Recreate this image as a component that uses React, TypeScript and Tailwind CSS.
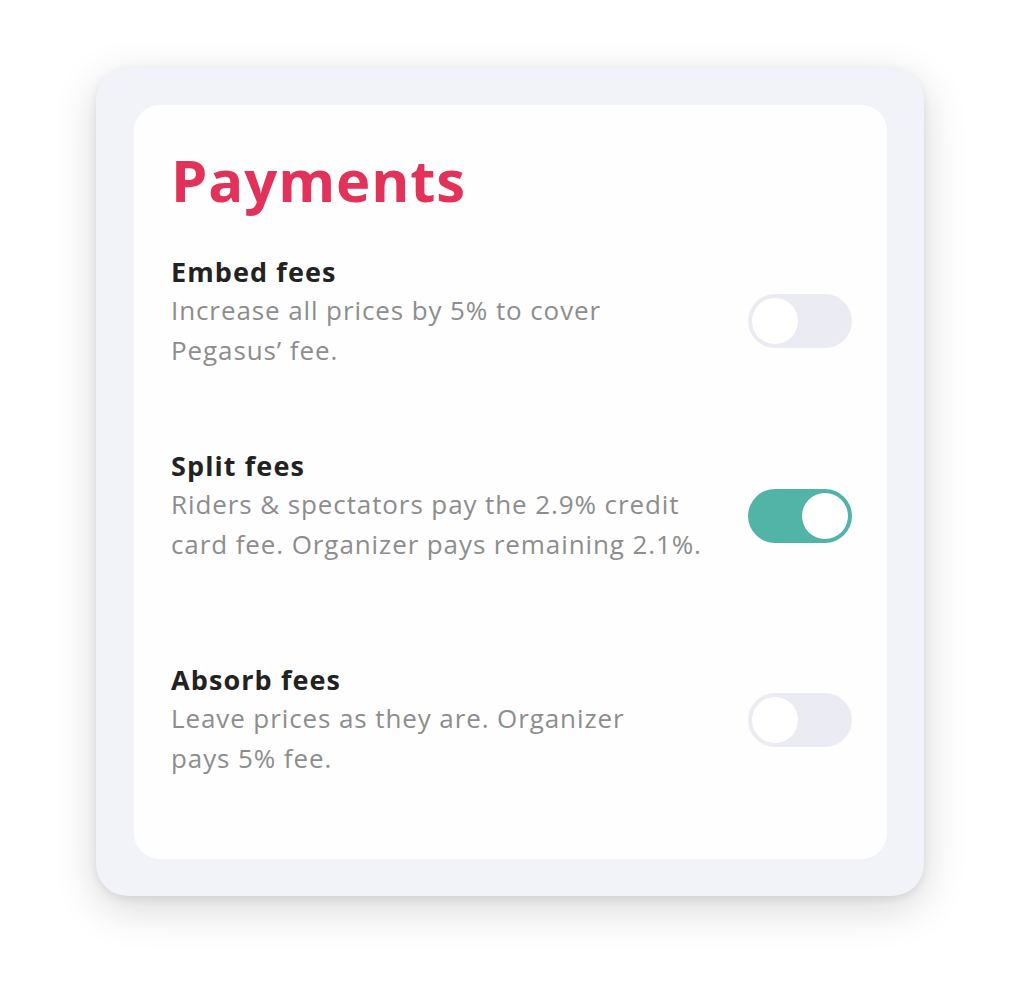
import React from "react";

function Toggle({ on }: { on: boolean }) {
  return (
    <div
      className={
        on
          ? "w-[104px] h-[54px] rounded-full bg-[#52b3a7] flex items-center justify-end px-[4px] shrink-0"
          : "w-[104px] h-[54px] rounded-full bg-[#ebebf3] flex items-center justify-start px-[4px] shrink-0"
      }
    >
      <div className="w-[46px] h-[46px] rounded-full bg-white" />
    </div>
  );
}

function Row({
  title,
  lines,
  on,
  className,
  toggleClass,
}: {
  title: string;
  lines: string[];
  on: boolean;
  className: string;
  toggleClass: string;
}) {
  return (
    <div className={"flex justify-between items-start " + className}>
      <div className="flex flex-col">
        <div className="text-[27px] leading-[32px] font-bold text-[#222222] tracking-[1.1px]">{title}</div>
        <div className="text-[26px] leading-[40px] text-[#8d8d8d] tracking-[0.9px] mt-[2px]">
          {lines.map((l, i) => (
            <div key={i}>{l}</div>
          ))}
        </div>
      </div>
      <div className={toggleClass}>
        <Toggle on={on} />
      </div>
    </div>
  );
}

export default function App() {
  return (
    <div
      className="w-[1024px] h-[984px] bg-white flex items-start justify-center pt-[68px] pr-[4px]"
      style={{ fontFamily: '"Open Sans", "Noto Sans", sans-serif' }}
    >
      <div className="w-[828px] h-[828px] rounded-[32px] bg-[#f2f3f8] p-[37px] pl-[38px] shadow-[0_12px_44px_rgba(0,0,0,0.16),0_3px_8px_rgba(0,0,0,0.08)]">
        <div className="w-full h-full rounded-[26px] bg-[#fefefe] pl-[37px] pr-[35px] pt-[46px]">
          <div className="text-[58px] leading-[58px] font-bold text-[#e3325a] tracking-[0.9px]">Payments</div>
          <Row
            title="Embed fees"
            lines={["Increase all prices by 5% to cover", "Pegasus’ fee."]}
            on={false}
            className="mt-[47px]"
            toggleClass="mt-[38px]"
          />
          <Row
            title="Split fees"
            lines={["Riders & spectators pay the 2.9% credit", "card fee. Organizer pays remaining 2.1%."]}
            on={true}
            className="mt-[80px]"
            toggleClass="mt-[39px]"
          />
          <Row
            title="Absorb fees"
            lines={["Leave prices as they are. Organizer", "pays 5% fee."]}
            on={false}
            className="mt-[100px]"
            toggleClass="mt-[29px]"
          />
        </div>
      </div>
    </div>
  );
}
